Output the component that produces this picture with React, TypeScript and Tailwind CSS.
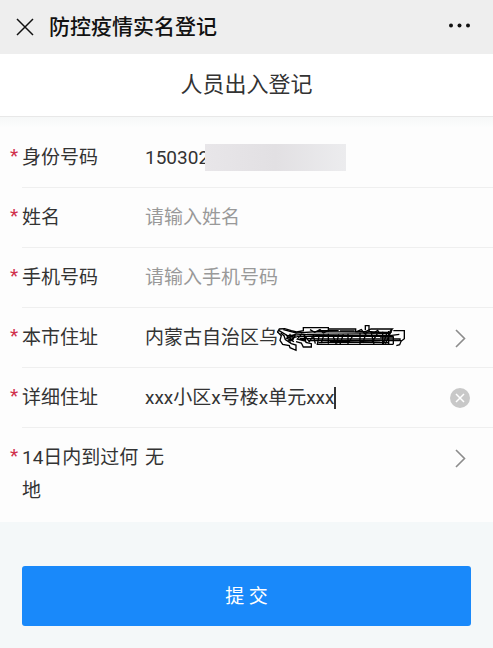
import { useState } from "react";
import type { ReactNode } from "react";

type FieldProps = {
	label: string;
	htmlFor: string;
	last?: boolean;
	children: ReactNode;
};

function Field({ label, htmlFor, last, children }: FieldProps) {
	return (
		<div className="flex pl-[10px]">
			<span className="w-3 shrink-0 py-[11px] text-[#d0304a]">*</span>
			<div className={`flex flex-1 min-w-0 pr-[22px] ${last ? "" : "border-b border-[#efefef]"}`}>
				<label htmlFor={htmlFor} className="w-[123px] shrink-0 py-[13px]">
					{label}
				</label>
				<div className="flex flex-1 min-w-0 h-[59px] items-center">{children}</div>
			</div>
		</div>
	);
}

function Chevron() {
	return (
		<svg className="ml-auto w-[22px] h-[22px] shrink-0" viewBox="0 0 22 22" fill="none" stroke="#8c8c8c" strokeWidth="1.6">
			<path d="M7 3l8.500 8.500L7 20" />
		</svg>
	);
}

// pen strokes that hide the rest of the address
function Scribble() {
	return (
		<svg
			className="absolute top-[3px] left-[129px] w-[132px] h-[28px]"
			viewBox="42 27 396 84"
			fill="none"
			stroke="#000"
			strokeWidth="4"
			aria-hidden="true"
		>
			<path d="M52 52l6-10 16-1 20 6 16 4 20-4v-9h75v12M205 42h82v8h30l16-8h64l-8 8M400 47h33v24l-10 8-4 10-10 3" />
			<path d="M52 50l12 12-4 14 8 12 20 4 2 6 18 8V90l-14-4-18-12-4-12-10-8M108 80l16 4 6 12h24V86l-16-4-2-8-18-2" />
			<path d="M56 46l26 16 48-4 50 4h210l28-4M70 44l40 10 60-4 224 2" />
			<path d="M110 64h290M120 70l60 2 240 0v6M140 58l250-2M145 77h280M170 88h230M175 83l60-2 150 2" />
			<path d="M150 44l14 8 16-8 10 10 12-6M316 46V32h11v16l14 6 12-8 6 10M290 50l14-6 10 12 16-8" />
			<path d="M78 60l20 16 8-18-26 12 22 10M84 78l22-12M80 66h30M90 56v28M126 56l-14 16 24 6-4-18 16 20 12-18 6 24" />
			<path d="M178 58l-6 30M192 58l-8 26M205 56v30M218 60l10 26M236 58l-6 28M250 58l-10 30M264 56v32M280 60l-14 22M300 54v34M318 56l-10 28M334 54l8 34M352 56l-16 26M368 50v38M380 56l-10 30M386 48v40M396 44l-20 42" />
			<path d="M176 47h60M240 48h44M330 50l34 4 30-2M210 80h60M300 80l60 2M360 66h40v22" />
		</svg>
	);
}

const inputStyle = "min-w-0 h-[33px] bg-transparent outline-none placeholder:text-[#999]";

export default function App() {
	const [name, setName] = useState("");
	const [phone, setPhone] = useState("");
	const [idNumber, setIdNumber] = useState("150302");
	const [address, setAddress] = useState("xxx小区x号楼x单元xxx");

	return (
		<div className="min-h-screen bg-[#f4f8f9] font-[Roboto,'Noto_Sans_CJK_SC',sans-serif] text-[19px] leading-[33px] text-[#333]">
			<header className="flex h-[54px] items-center bg-[#eee] pl-4 pr-[22px] text-[#111]">
				<button type="button" aria-label="关闭" className="shrink-0">
					<svg className="w-[18px] h-[18px]" viewBox="0 0 18 18" fill="none" stroke="currentColor" strokeWidth="1.5">
						<path d="M1 1l16 16M17 1L1 17" />
					</svg>
				</button>
				<span className="ml-[15px] text-[21px] font-medium">防控疫情实名登记</span>
				<button type="button" aria-label="更多" className="ml-auto shrink-0">
					<svg className="w-6 h-6" viewBox="0 0 24 24" fill="currentColor">
						<circle cx="4" cy="10.500" r="2" />
						<circle cx="12.500" cy="10.500" r="2" />
						<circle cx="21" cy="10.500" r="2" />
					</svg>
				</button>
			</header>

			<h1 className="border-b border-[#e8e8e8] bg-white pt-[14px] pb-[15px] text-center text-[22px]">人员出入登记</h1>

			<form onSubmit={(e) => e.preventDefault()}>
				<div className="bg-[#fdfdfd] pb-[2px]">
					<div className="h-[11px] bg-linear-to-b from-[#f6f8f8] to-[#fdfdfd]" />
					<Field label="身份号码" htmlFor="idNumber">
						<div className="relative flex w-full">
							<input
								id="idNumber"
								className={`${inputStyle} w-full`}
								value={idNumber}
								onChange={(e) => setIdNumber(e.target.value)}
							/>
							<span className="absolute top-[3px] left-[60px] w-[141px] h-[27px] bg-linear-to-r from-[#e8e6e9] via-[#e2e0e3] to-[#ececee]" />
						</div>
					</Field>
					<Field label="姓名" htmlFor="name">
						<input
							id="name"
							className={`${inputStyle} w-full`}
							placeholder="请输入姓名"
							value={name}
							onChange={(e) => setName(e.target.value)}
						/>
					</Field>
					<Field label="手机号码" htmlFor="phone">
						<input
							id="phone"
							type="tel"
							className={`${inputStyle} w-full`}
							placeholder="请输入手机号码"
							value={phone}
							onChange={(e) => setPhone(e.target.value)}
						/>
					</Field>
					<Field label="本市住址" htmlFor="city">
						<button type="button" id="city" className="relative flex w-full items-center text-left">
							内蒙古自治区乌
							<Scribble />
							<Chevron />
						</button>
					</Field>
					<Field label="详细住址" htmlFor="address">
						<input
							id="address"
							className={`${inputStyle} field-sizing-content caret-transparent`}
							value={address}
							onChange={(e) => setAddress(e.target.value)}
						/>
						<span className="w-[2px] h-[22px] shrink-0 bg-[#333]" />
						<button
							type="button"
							aria-label="清除"
							className="ml-auto shrink-0"
							onClick={() => setAddress("")}
						>
							<svg className="w-[22px] h-[22px]" viewBox="0 0 22 22" fill="none">
								<circle cx="11" cy="11" r="10" fill="#c8c8c8" />
								<path d="M7 7l8 8M15 7l-8 8" stroke="#fff" strokeWidth="1.500" />
							</svg>
						</button>
					</Field>
					<Field label="14日内到过何地" htmlFor="visited" last>
						<button type="button" id="visited" className="flex w-full items-center text-left">
							无
							<Chevron />
						</button>
					</Field>
				</div>

				<div className="px-[22px] pt-[44px] pb-[22px]">
					<button type="submit" className="h-[60px] w-full rounded-[3px] bg-[#1989fa] text-white">
						提 交
					</button>
				</div>
			</form>
		</div>
	);
}
